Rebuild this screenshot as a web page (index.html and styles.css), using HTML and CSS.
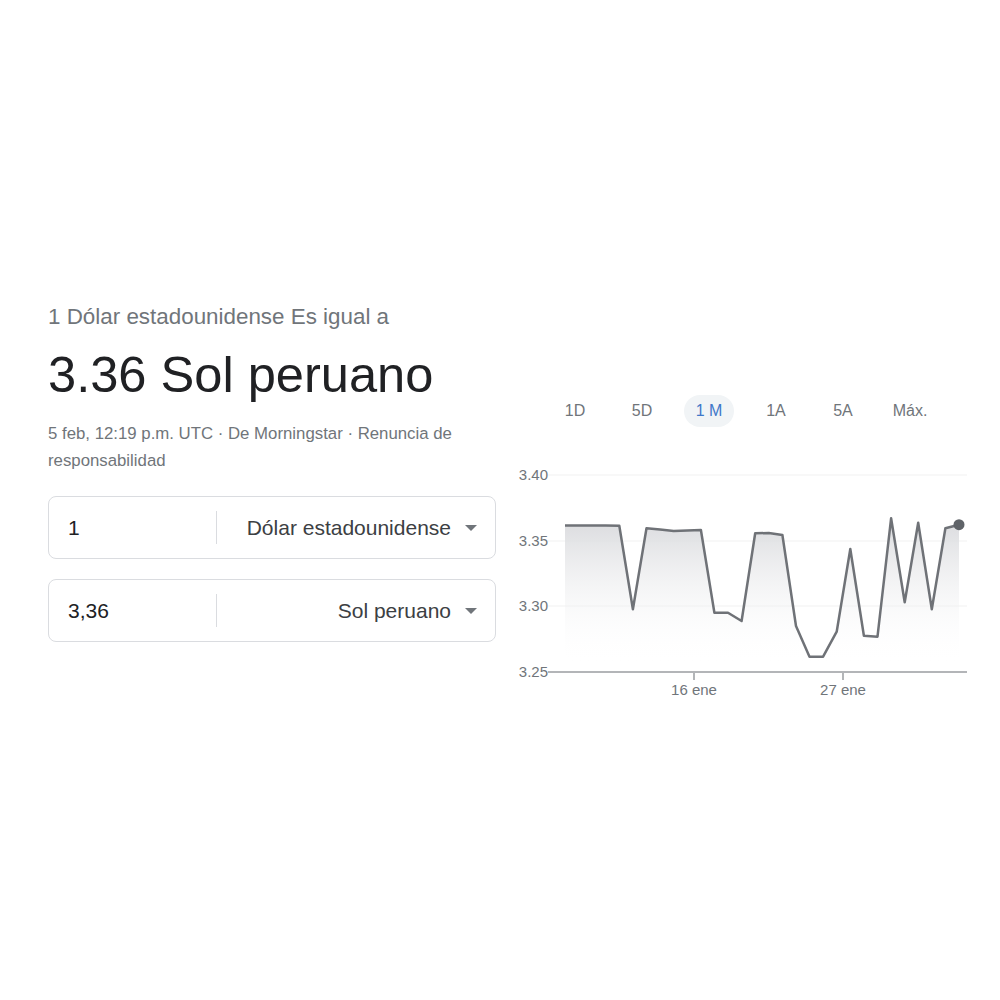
FILE: index.html
```html
<!DOCTYPE html>
<html lang="es">
<head>
  <meta charset="UTF-8" />
  <title>Conversor de divisas</title>
  <meta name="viewport" content="width=device-width, initial-scale=1.0" />
  <link rel="stylesheet" href="styles.css">
</head>
<body>
  <main class="converter">
    <section class="summary">
      <div class="from-line">1 Dólar estadounidense Es igual a</div>
      <div class="result">3.36 Sol peruano</div>
      <div class="meta">5 feb, 12:19 p.m. UTC · De Morningstar · Renuncia de responsabilidad</div>

      <div class="field">
        <div class="amount">1</div>
        <div class="divider"></div>
        <div class="currency">Dólar estadounidense <span class="caret"></span></div>
      </div>
      <div class="field">
        <div class="amount">3,36</div>
        <div class="divider"></div>
        <div class="currency">Sol peruano <span class="caret"></span></div>
      </div>
    </section>

    <section class="chart">
      <div class="ranges">
        <button class="range">1D</button>
        <button class="range">5D</button>
        <button class="range active">1 M</button>
        <button class="range">1A</button>
        <button class="range">5A</button>
        <button class="range">Máx.</button>
      </div>

      <svg class="plot" width="455" height="240" viewBox="0 0 455 240">
        <defs>
          <linearGradient id="area" x1="0" y1="58" x2="0" y2="205" gradientUnits="userSpaceOnUse">
            <stop offset="0" stop-color="#d9dadd" />
            <stop offset="1" stop-color="#ffffff" stop-opacity="0" />
          </linearGradient>
        </defs>

        <!-- grid -->
        <line class="grid" x1="33" y1="15" x2="452" y2="15" />
        <line class="grid" x1="33" y1="81" x2="452" y2="81" />
        <line class="grid" x1="33" y1="146" x2="452" y2="146" />
        <text class="ylabel" x="33" y="20">3.40</text>
        <text class="ylabel" x="33" y="86">3.35</text>
        <text class="ylabel" x="33" y="151">3.30</text>
        <text class="ylabel" x="33" y="217">3.25</text>

        <polygon fill="url(#area)" points="50,65.5 63.6,65.5 77.2,65.5 90.8,65.5 104.3,65.7 117.9,149.3 131.5,68.3 145.1,69.5 158.7,71 172.3,70.5 185.9,70 199.4,152.7 213,152.7 226.6,161 240.2,73.3 253.8,73 267.4,75 281,166 294.5,196.7 308.1,196.7 321.7,171.7 335.3,89 348.9,175.7 362.5,176.7 376.1,58.3 389.7,142.3 403.2,62.7 416.8,149.3 430.4,68.3 444,64.7 444,212 50,212" />

        <!-- axis -->
        <line class="axis" x1="33" y1="212" x2="452" y2="212" />
        <line class="axis" x1="179" y1="212" x2="179" y2="220" />
        <line class="axis" x1="328" y1="212" x2="328" y2="220" />
        <text class="xlabel" x="179" y="235">16 ene</text>
        <text class="xlabel" x="328" y="235">27 ene</text>

        <polyline class="line" points="50,65.5 63.6,65.5 77.2,65.5 90.8,65.5 104.3,65.7 117.9,149.3 131.5,68.3 145.1,69.5 158.7,71 172.3,70.5 185.9,70 199.4,152.7 213,152.7 226.6,161 240.2,73.3 253.8,73 267.4,75 281,166 294.5,196.7 308.1,196.7 321.7,171.7 335.3,89 348.9,175.7 362.5,176.7 376.1,58.3 389.7,142.3 403.2,62.7 416.8,149.3 430.4,68.3 444,64.7" />
        <circle class="dot" cx="444" cy="64.7" r="5.5" />
      </svg>
    </section>
  </main>
</body>
</html>
```

FILE: styles.css
```css
body {
  margin: 0;
  background: #ffffff;
  font-family: "Liberation Sans", Arial, sans-serif;
  color: #202124;
}

.converter {
  display: flex;
  align-items: flex-start;
  padding: 303px 0 0 48px;
}

.summary {
  width: 448px;
}

.from-line {
  font-size: 22.4px;
  line-height: 28px;
  color: #70757a;
}

.result {
  font-size: 50.6px;
  line-height: 58px;
  margin-top: 15px;
  color: #202124;
}

.meta {
  font-size: 16.8px;
  line-height: 27px;
  color: #70757a;
  margin-top: 16px;
}

.field {
  display: flex;
  align-items: center;
  height: 63px;
  border: 1px solid #dadce0;
  border-radius: 8px;
  margin-top: 20px;
  box-sizing: border-box;
}

.meta + .field {
  margin-top: 22px;
}

.amount {
  width: 148px;
  padding-left: 19px;
  font-size: 21px;
  color: #202124;
}

.divider {
  width: 1px;
  height: 33px;
  background: #dadce0;
}

.currency {
  flex: 1;
  display: flex;
  align-items: center;
  justify-content: flex-end;
  gap: 14px;
  padding-right: 18px;
  font-size: 21px;
  color: #3c4043;
}

.caret {
  width: 0;
  height: 0;
  border-left: 6.5px solid transparent;
  border-right: 6.5px solid transparent;
  border-top: 6.5px solid #70757a;
}

.chart {
  width: 455px;
  margin-left: 19px;
  margin-top: 92px;
}

.ranges {
  display: flex;
  justify-content: center;
  gap: 17px;
}

.range {
  width: 50px;
  height: 32px;
  border: none;
  border-radius: 16px;
  background: none;
  font-family: inherit;
  font-size: 16px;
  color: #70757a;
  padding: 0;
  cursor: pointer;
}

.range.active {
  background: #f1f4f6;
  color: #3f78c9;
}

.plot {
  display: block;
  margin-top: 33px;
  font-family: "Liberation Sans", Arial, sans-serif;
}

.grid {
  stroke: #f1f1f1;
  stroke-width: 1;
}

.axis {
  stroke: #b3b5b8;
  stroke-width: 2;
}

.ylabel {
  font-size: 15px;
  fill: #70757a;
  text-anchor: end;
}

.xlabel {
  font-size: 15px;
  fill: #70757a;
  text-anchor: middle;
}

.line {
  fill: none;
  stroke: #6f7277;
  stroke-width: 2.5;
  stroke-linejoin: round;
}

.dot {
  fill: #5f6368;
}
```
